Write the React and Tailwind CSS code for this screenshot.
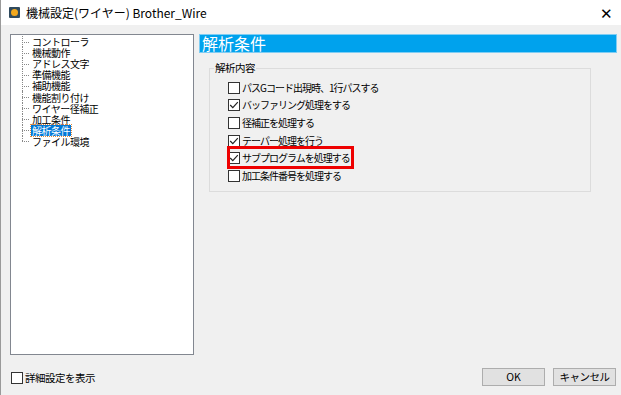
import React from 'react';

const FONT = { fontFamily: '"Noto Sans CJK JP", "Liberation Sans", sans-serif' };

const treeItems = [
  'コントローラ',
  '機械動作',
  'アドレス文字',
  '準備機能',
  '補助機能',
  '機能割り付け',
  'ワイヤー径補正',
  '加工条件',
  '解析条件',
  'ファイル環境',
];

const options = [
  { label: 'パスGコード出現時、1行パスする', checked: false },
  { label: 'バッファリング処理をする', checked: true },
  { label: '径補正を処理する', checked: false },
  { label: 'テーパー処理を行う', checked: true },
  { label: 'サブプログラムを処理する', checked: true, marked: true },
  { label: '加工条件番号を処理する', checked: false },
];

function Check({ checked }) {
  return (
    <span className="w-[12px] h-[12px] border border-[#333] bg-white flex items-center justify-center shrink-0">
      {checked && (
        <svg width="10" height="10" viewBox="0 0 10 10">
          <path d="M1.2 5 L3.8 7.6 L8.8 2.2" fill="none" stroke="#222" strokeWidth="1.2" />
        </svg>
      )}
    </span>
  );
}

export default function App() {
  return (
    <div className="w-[621px] h-[395px] bg-[#f0f0f0] flex flex-col border-l border-[#9a9a9a] text-[#000]" style={FONT}>
      {/* title bar */}
      <div className="h-[25px] bg-white flex items-center shrink-0">
        <div className="ml-[8px] w-[11px] h-[11px] bg-[#2f4a5e] flex items-center justify-center rounded-[1px]">
          <div className="w-[7px] h-[7px] rounded-full bg-[#f2a81e]" />
        </div>
        <span className="ml-[6px] text-[12px] leading-none">機械設定(ワイヤー) Brother_Wire</span>
        <span className="ml-auto mr-[8px] text-[15px] leading-none font-light">✕</span>
      </div>

      <div className="flex h-[330px] pl-[9px] pt-[9px] gap-[5px] shrink-0">
        {/* tree */}
        <div className="w-[184px] h-[321px] bg-white border border-[#828790] pt-[1px] pl-[11px]">
          {treeItems.map((t, i) => (
            <div key={t} className="flex items-center h-[11.1px]">
              <span className="relative w-[9px] h-full shrink-0">
                <span
                  className={`absolute left-0 top-0 border-l border-dotted border-[#888] ${i === treeItems.length - 1 ? 'h-1/2' : 'h-full'}`}
                />
                <span className="absolute left-0 top-1/2 w-[7px] border-t border-dotted border-[#888]" />
              </span>
              <span
                className={`text-[10px] leading-[11px] tracking-[-0.5px] px-[1px] whitespace-nowrap ${
                  t === '解析条件' ? 'bg-[#0078d7] text-white outline outline-1 outline-dotted outline-[#e08a3c]' : ''
                }`}
              >
                {t}
              </span>
            </div>
          ))}
        </div>

        {/* right panel */}
        <div className="w-[418px] flex flex-col">
          <div className="h-[19px] bg-[#00a2ed] border border-[#7fcdf3] text-white text-[16px] leading-[17px] pl-[2px]">
            解析条件
          </div>
          <div className="relative ml-[10px] mt-[15px] w-[382px] h-[124px] border border-[#dcdcdc] pt-[10px] pl-[18px]">
            <span className="absolute left-[4px] -top-[9px] bg-[#f0f0f0] px-[1px] text-[10.5px] leading-[16px] tracking-[-0.5px]">解析内容</span>
            {options.map((o) => (
              <div key={o.label} className="relative flex items-center h-[17.6px] gap-[2px]">
                <Check checked={o.checked} />
                <span className="text-[10px] leading-none tracking-[-1px] whitespace-nowrap">{o.label}</span>
                {o.marked && (
                  <span className="absolute -left-[1px] -top-[3px] w-[127px] h-[23px] border-[3px] border-[#ee0000]" />
                )}
              </div>
            ))}
          </div>
        </div>
      </div>

      {/* bottom bar */}
      <div className="flex-1 flex items-start pl-[10px] pr-[5px]">
        <div className="flex items-center gap-[2px] mt-[17px]">
          <Check checked={false} />
          <span className="text-[10.5px] leading-none tracking-[-0.5px]">詳細設定を表示</span>
        </div>
        <div className="ml-auto flex gap-[8px] mt-[13px]">
          <button className="w-[63px] h-[18px] bg-[#e1e1e1] border border-[#adadad] text-[10.5px] leading-none">OK</button>
          <button className="w-[63px] h-[18px] bg-[#e1e1e1] border border-[#adadad] text-[10.5px] leading-none tracking-[-0.5px]">キャンセル</button>
        </div>
      </div>
    </div>
  );
}
